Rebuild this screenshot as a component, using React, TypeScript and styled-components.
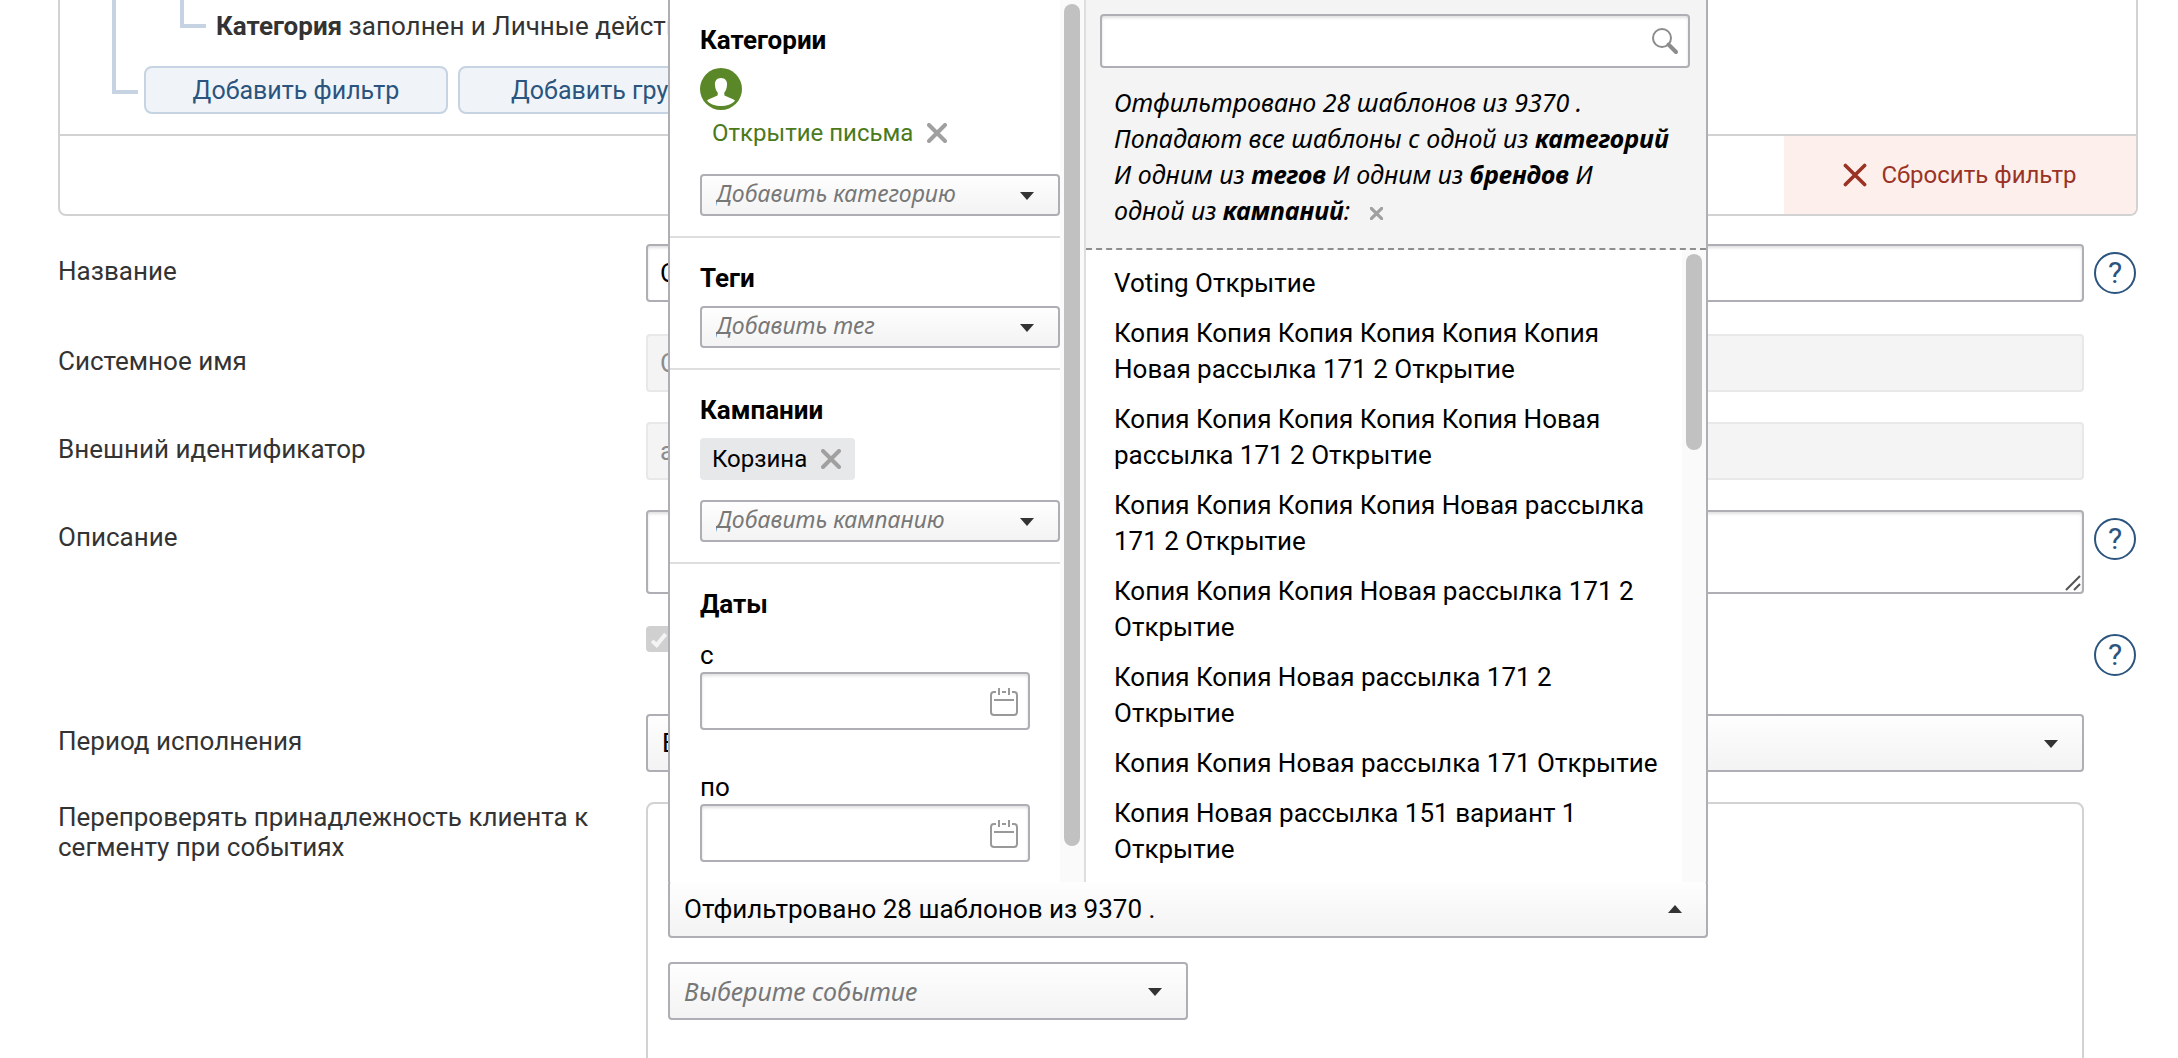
import React, { useState } from "react";
import styled, { createGlobalStyle, css } from "styled-components";

const uprightFont = `Roboto, "Noto Sans", sans-serif`;
const italicFont = `"Noto Sans", "Open Sans", sans-serif`;

const color = {
  text: "#333333",
  border: "#aeaeb4",
  line: "#d2d2d2",
  softLine: "#dedede",
  blue: "#2b547e",
  tree: "#c5d3e2",
  red: "#9a3324",
  green: "#4b7a1b",
};

const GlobalStyle = createGlobalStyle`
  *, *::before, *::after { box-sizing: border-box; }
  body { margin: 0; background: #ffffff; }
  body, button, input, select, textarea {
    font-family: ${uprightFont};
    font-size: 26px;
  }
  button { cursor: pointer; }
`;

const Page = styled.main`
  height: 100vh;
  overflow: hidden;
  padding: 0 40px 0 58px;
  color: ${color.text};
  line-height: 36px;
`;

/* ---------- filter builder ---------- */

const FilterPanel = styled.section`
  border: 2px solid ${color.line};
  border-top: 0;
  border-radius: 0 0 8px 8px;
  overflow: hidden;
`;

const Tree = styled.div`
  display: flex;
  flex-direction: column;
  height: 134px;
  padding-left: 52px;
`;

const TreeTrunk = styled.div`
  display: flex;
  height: 66px;
  padding-left: 64px;
  border-left: 4px solid ${color.tree};
`;

const Elbow = styled.div<{ $height: number }>`
  width: 26px;
  height: ${(p) => p.$height}px;
  border-left: 4px solid ${color.tree};
  border-bottom: 4px solid ${color.tree};
`;

const Condition = styled.p`
  margin: 8px 0 0 10px;
  white-space: nowrap;
`;

const TreeActions = styled.div`
  display: flex;
`;

const ActionButton = styled.button`
  width: 304px;
  height: 48px;
  margin-right: 10px;
  padding: 0;
  border: 2px solid ${color.tree};
  border-radius: 8px;
  background: #f0f4f8;
  color: ${color.blue};
  font-size: 25px;

  &:first-of-type {
    margin-left: 6px;
  }
`;

const PanelFooter = styled.div`
  display: flex;
  justify-content: flex-end;
  height: 80px;
  border-top: 2px solid ${color.line};
`;

const ResetButton = styled.button`
  display: flex;
  align-items: center;
  justify-content: center;
  gap: 14px;
  width: 352px;
  border: 0;
  background: #fdefec;
  color: ${color.red};
  font-size: 24px;
`;

/* ---------- form rows ---------- */

const Form = styled.form`
  display: flex;
  flex-direction: column;
  gap: 30px;
  padding-top: 28px;
`;

const Row = styled.div`
  display: grid;
  grid-template-columns: 588px 1fr 54px;
  align-items: start;
  min-height: 58px;

  &:first-child {
    min-height: 60px;
  }
`;

const RowLabel = styled.label<{ $flush?: boolean }>`
  padding: ${(p) => (p.$flush ? 0 : 12)}px 40px 0 0;
  line-height: 30px;
`;

const fieldFrame = css`
  width: 100%;
  border: 2px solid ${color.border};
  border-radius: 4px;
  color: #000000;
`;

const TextInput = styled.input`
  ${fieldFrame}
  height: 58px;
  padding: 0 12px;
  background: #ffffff;
  box-shadow: inset 0 2px 3px rgba(0, 0, 0, 0.12);

  &:disabled {
    border-color: #e8e8e8;
    background: #f4f4f4;
    color: #8c8c8c;
    box-shadow: none;
  }
`;

const TextAreaFrame = styled.div`
  position: relative;
  margin-bottom: 2px;
`;

const TextArea = styled.textarea`
  ${fieldFrame}
  display: block;
  height: 84px;
  padding: 12px;
  background: #ffffff;
  box-shadow: inset 0 2px 3px rgba(0, 0, 0, 0.12);
  resize: none;
`;

const ResizeGrip = styled.svg`
  position: absolute;
  right: 3px;
  bottom: 3px;
  width: 16px;
  height: 16px;
  pointer-events: none;
`;

const CheckBox = styled.input`
  appearance: none;
  display: grid;
  place-items: center;
  width: 26px;
  height: 26px;
  margin: 0;
  border-radius: 4px;
  background: #d0d0d0;

  &::after {
    content: "";
    width: 8px;
    height: 16px;
    border: solid #f4f4f4;
    border-width: 0 4px 4px 0;
    transform: rotate(40deg);
  }
`;

const HelpButton = styled.button`
  display: block;
  width: 42px;
  height: 42px;
  margin: 8px 0 0 10px;
  padding: 0;
  border: 2px solid ${color.blue};
  border-radius: 50%;
  background: transparent;
  color: ${color.blue};
  font-size: 30px;
  line-height: 38px;
`;

const SelectFrame = styled.div<{ $compact?: boolean; $width?: number }>`
  position: relative;
  width: ${(p) => (p.$width ? `${p.$width}px` : "100%")};
  height: ${(p) => (p.$compact ? 42 : 58)}px;
`;

const Select = styled.select<{ $compact?: boolean; $placeholder?: boolean }>`
  ${fieldFrame}
  appearance: none;
  display: block;
  height: 100%;
  padding: ${(p) => (p.$compact ? "0 48px 4px 14px" : "0 48px 0 14px")};
  background: linear-gradient(#fefefe, #f3f3f3);

  ${(p) =>
    p.$placeholder &&
    css`
      color: #777777;
      font-family: ${italicFont};
      font-size: ${p.$compact ? 23 : 25}px;
      font-style: italic;
    `}
`;

const SelectArrow = styled.svg`
  position: absolute;
  top: 50%;
  right: 26px;
  width: 14px;
  height: 8px;
  margin-top: -3px;
  pointer-events: none;
`;

const EventBox = styled.div`
  min-height: 400px;
  padding: 76px 20px 20px;
  border: 2px solid ${color.line};
  border-radius: 8px;
`;

const EventStack = styled.div`
  display: flex;
  flex-direction: column;
  gap: 24px;
`;

/* ---------- template picker ---------- */

const Picker = styled.div`
  position: relative;
  width: 1040px;
`;

const PickerToggle = styled.button`
  display: flex;
  align-items: center;
  justify-content: space-between;
  width: 100%;
  height: 58px;
  padding: 0 24px 0 14px;
  border: 2px solid ${color.border};
  border-top-color: transparent;
  border-radius: 4px;
  background: linear-gradient(#fefefe, #f3f3f3);
  color: #000000;
`;

const Popover = styled.div`
  position: absolute;
  bottom: 56px;
  left: 0;
  z-index: 2;
  display: flex;
  width: 100%;
  height: 882px;
  border: solid ${color.border};
  border-width: 0 2px;
  background: #ffffff;
  color: #000000;
`;

const FilterColumn = styled.div`
  display: flex;
  width: 416px;
  border-right: 2px solid ${color.softLine};
`;

const Filters = styled.div`
  flex: 1;
`;

const FilterGroup = styled.section`
  padding: 22px 0 20px 30px;
  border-bottom: 2px solid ${color.softLine};

  &:last-child {
    border-bottom: 0;
  }
`;

const GroupTitle = styled.h3`
  margin: 0 0 10px;
  font-size: 26px;
  font-weight: 700;
  line-height: 36px;
`;

const AvatarIcon = styled.svg`
  display: block;
  width: 42px;
  height: 42px;
  margin-bottom: 2px;
`;

const Tag = styled.div<{ $plain?: boolean }>`
  display: flex;
  align-items: center;
  gap: 14px;
  width: max-content;
  height: 42px;
  margin-bottom: 20px;
  padding: 0 14px 0 12px;
  border-radius: 4px;
  background: ${(p) => (p.$plain ? "transparent" : "#e7e8ea")};
  color: ${(p) => (p.$plain ? color.green : "#000000")};
  font-size: 24px;
`;

const IconButton = styled.button`
  display: inline-flex;
  padding: 0;
  border: 0;
  background: transparent;
`;

const DateLabel = styled.label`
  display: block;
  width: 330px;
  margin-top: 16px;
  line-height: 34px;

  & + & {
    margin-top: 40px;
  }
`;

const DateField = styled.span`
  position: relative;
  display: block;
`;

const CalendarIcon = styled.svg`
  position: absolute;
  top: 16px;
  right: 12px;
  width: 28px;
  height: 28px;
`;

const Track = styled.div`
  flex: none;
  width: 24px;
  padding: 4px 4px 0;
  background: #fafafa;
`;

const Thumb = styled.div<{ $height: number }>`
  height: ${(p) => p.$height}px;
  border-radius: 8px;
  background: #c1c1c1;
`;

const ResultColumn = styled.div`
  display: flex;
  flex: 1;
  flex-direction: column;
`;

const ResultHeader = styled.div`
  height: 250px;
  padding: 14px 16px 0 14px;
  border-bottom: 2px dashed #8e8e8e;
  background: #f4f4f4;
`;

const SearchField = styled.div`
  position: relative;

  & input {
    height: 54px;
  }
`;

const SearchIcon = styled.svg`
  position: absolute;
  top: 13px;
  right: 11px;
  width: 28px;
  height: 28px;
`;

const Summary = styled.p`
  margin: 16px 0 0 14px;
  font-family: ${italicFont};
  font-size: 25px;
  font-style: italic;
  line-height: 36px;
  white-space: nowrap;
`;

const ClearButton = styled(IconButton)`
  margin-left: 20px;
`;

const ResultBody = styled.div`
  display: flex;
  flex: 1;
`;

const Results = styled.ul`
  flex: 1;
  margin: 0;
  padding: 8px 14px 0 28px;
  list-style: none;
`;

const Result = styled.li`
  padding: 7px 0;
  line-height: 36px;
`;

/* ---------- drawings ---------- */

const Cross = ({ size, stroke, weight }: { size: number; stroke: string; weight: number }) => (
  <svg width={size} height={size} viewBox="0 0 20 20" aria-hidden="true">
    <path d="M2 2 18 18M18 2 2 18" stroke={stroke} strokeWidth={weight} strokeLinecap="round" />
  </svg>
);

const DownArrow = () => (
  <SelectArrow viewBox="0 0 14 8" aria-hidden="true">
    <path d="M0 0h14L7 8z" fill="#333333" />
  </SelectArrow>
);

const Calendar = () => (
  <CalendarIcon viewBox="0 0 28 28" fill="none" stroke="#999999" strokeWidth="2" aria-hidden="true">
    <path d="M6 4H4a3 3 0 0 0-3 3v17a3 3 0 0 0 3 3h20a3 3 0 0 0 3-3V7a3 3 0 0 0-3-3h-2M12 4h4M9 0v7M19 0v7M4 12h20" />
  </CalendarIcon>
);

/* ---------- composed parts ---------- */

type DropdownProps = {
  id?: string;
  label?: string;
  text: string;
  compact?: boolean;
  placeholder?: boolean;
  width?: number;
};

const Dropdown = ({ id, label, text, compact, placeholder, width }: DropdownProps) => (
  <SelectFrame $compact={compact} $width={width}>
    <Select id={id} aria-label={label} $compact={compact} $placeholder={placeholder}>
      <option>{text}</option>
    </Select>
    <DownArrow />
  </SelectFrame>
);

const Help = () => (
  <HelpButton type="button" aria-label="Справка">
    ?
  </HelpButton>
);

const templates = [
  "Voting Открытие",
  "Копия Копия Копия Копия Копия Копия Новая рассылка 171 2 Открытие",
  "Копия Копия Копия Копия Копия Новая рассылка 171 2 Открытие",
  "Копия Копия Копия Копия Новая рассылка 171 2 Открытие",
  "Копия Копия Копия Новая рассылка 171 2 Открытие",
  "Копия Копия Новая рассылка 171 2 Открытие",
  "Копия Копия Новая рассылка 171 Открытие",
  "Копия Новая рассылка 151 вариант 1 Открытие",
];

const TemplatePicker = () => {
  const [open, setOpen] = useState(true);
  return (
    <Picker>
      {open && (
        <Popover>
          <FilterColumn>
            <Filters>
              <FilterGroup>
                <GroupTitle>Категории</GroupTitle>
                <AvatarIcon viewBox="0 0 42 42" aria-hidden="true">
                  <circle cx="21" cy="21" r="21" fill="#5a8727" />
                  <path
                    d="M21 10c-4 0-6.500 2.800-6 7 .2 3.500 1.200 6 2.700 7.500v2.500c0 1.200-7.500 2.800-10.700 5.500C10 36.500 15.500 38 21 38s11-1.500 14-5.500c-3.200-2.700-10.700-4.300-10.700-5.500v-2.500c1.500-1.500 2.500-4 2.700-7.500.5-4.200-2-7-6-7z"
                    fill="#ffffff"
                  />
                </AvatarIcon>
                <Tag $plain>
                  Открытие письма
                  <IconButton type="button" aria-label="Удалить категорию">
                    <Cross size={20} stroke="#a0a0a0" weight={4} />
                  </IconButton>
                </Tag>
                <Dropdown label="Категория" text="Добавить категорию" compact placeholder />
              </FilterGroup>
              <FilterGroup>
                <GroupTitle>Теги</GroupTitle>
                <Dropdown label="Тег" text="Добавить тег" compact placeholder />
              </FilterGroup>
              <FilterGroup>
                <GroupTitle>Кампании</GroupTitle>
                <Tag>
                  Корзина
                  <IconButton type="button" aria-label="Удалить кампанию">
                    <Cross size={20} stroke="#a0a0a0" weight={4} />
                  </IconButton>
                </Tag>
                <Dropdown label="Кампания" text="Добавить кампанию" compact placeholder />
              </FilterGroup>
              <FilterGroup>
                <GroupTitle>Даты</GroupTitle>
                <DateLabel>
                  с
                  <DateField>
                    <TextInput type="text" />
                    <Calendar />
                  </DateField>
                </DateLabel>
                <DateLabel>
                  по
                  <DateField>
                    <TextInput type="text" />
                    <Calendar />
                  </DateField>
                </DateLabel>
              </FilterGroup>
            </Filters>
            <Track>
              <Thumb $height={842} />
            </Track>
          </FilterColumn>
          <ResultColumn>
            <ResultHeader>
              <SearchField>
                <TextInput type="text" aria-label="Поиск шаблона" />
                <SearchIcon viewBox="0 0 28 28" fill="none" stroke="#8c8c8c" aria-hidden="true">
                  <circle cx="11" cy="11" r="9" strokeWidth="2" />
                  <path d="M17.500 17.500 25 25" strokeWidth="4" strokeLinecap="round" />
                </SearchIcon>
              </SearchField>
              <Summary>
                Отфильтровано 28 шаблонов из 9370 .<br />
                Попадают все шаблоны с одной из <b>категорий</b>
                <br />И одним из <b>тегов</b> И одним из <b>брендов</b> И<br />
                одной из <b>кампаний</b>:
                <ClearButton type="button" aria-label="Сбросить условия">
                  <Cross size={13} stroke="#a0a0a0" weight={5} />
                </ClearButton>
              </Summary>
            </ResultHeader>
            <ResultBody>
              <Results>
                {templates.map((name) => (
                  <Result key={name}>{name}</Result>
                ))}
              </Results>
              <Track>
                <Thumb $height={196} />
              </Track>
            </ResultBody>
          </ResultColumn>
        </Popover>
      )}
      <PickerToggle type="button" aria-expanded={open} onClick={() => setOpen(!open)}>
        Отфильтровано 28 шаблонов из 9370 .
        <svg width="14" height="8" viewBox="0 0 14 8" aria-hidden="true">
          <path d="M0 8h14L7 0z" fill="#333333" />
        </svg>
      </PickerToggle>
    </Picker>
  );
};

export default function App() {
  return (
    <>
      <GlobalStyle />
      <Page>
        <FilterPanel>
          <Tree>
            <TreeTrunk>
              <Elbow $height={28} />
              <Condition>
                <b>Категория</b> заполнен и Личные действия
              </Condition>
            </TreeTrunk>
            <TreeActions>
              <Elbow $height={28} />
              <ActionButton type="button">Добавить фильтр</ActionButton>
              <ActionButton type="button">Добавить группу</ActionButton>
            </TreeActions>
          </Tree>
          <PanelFooter>
            <ResetButton type="button">
              <Cross size={24} stroke={color.red} weight={3} />
              Сбросить фильтр
            </ResetButton>
          </PanelFooter>
        </FilterPanel>

        <Form>
          <Row>
            <RowLabel htmlFor="name">Название</RowLabel>
            <TextInput id="name" type="text" defaultValue="О" />
            <Help />
          </Row>
          <Row>
            <RowLabel htmlFor="system-name">Системное имя</RowLabel>
            <TextInput id="system-name" type="text" defaultValue="О" disabled />
          </Row>
          <Row>
            <RowLabel htmlFor="external-id">Внешний идентификатор</RowLabel>
            <TextInput id="external-id" type="text" defaultValue="а" disabled />
          </Row>
          <Row>
            <RowLabel htmlFor="description">Описание</RowLabel>
            <TextAreaFrame>
              <TextArea id="description" />
              <ResizeGrip viewBox="0 0 16 16" stroke="#555555" strokeWidth="2" aria-hidden="true">
                <path d="M1 15 15 1M9 15l6-6" />
              </ResizeGrip>
            </TextAreaFrame>
            <Help />
          </Row>
          <Row>
            <span />
            <CheckBox type="checkbox" aria-label="Активность" defaultChecked disabled />
            <Help />
          </Row>
          <Row>
            <RowLabel htmlFor="period">Период исполнения</RowLabel>
            <Dropdown id="period" text="В" />
          </Row>
          <Row>
            <RowLabel as="span" $flush>
              Перепроверять принадлежность клиента к сегменту при событиях
            </RowLabel>
            <EventBox>
              <EventStack>
                <TemplatePicker />
                <Dropdown label="Событие" text="Выберите событие" placeholder width={520} />
              </EventStack>
            </EventBox>
          </Row>
        </Form>
      </Page>
    </>
  );
}
